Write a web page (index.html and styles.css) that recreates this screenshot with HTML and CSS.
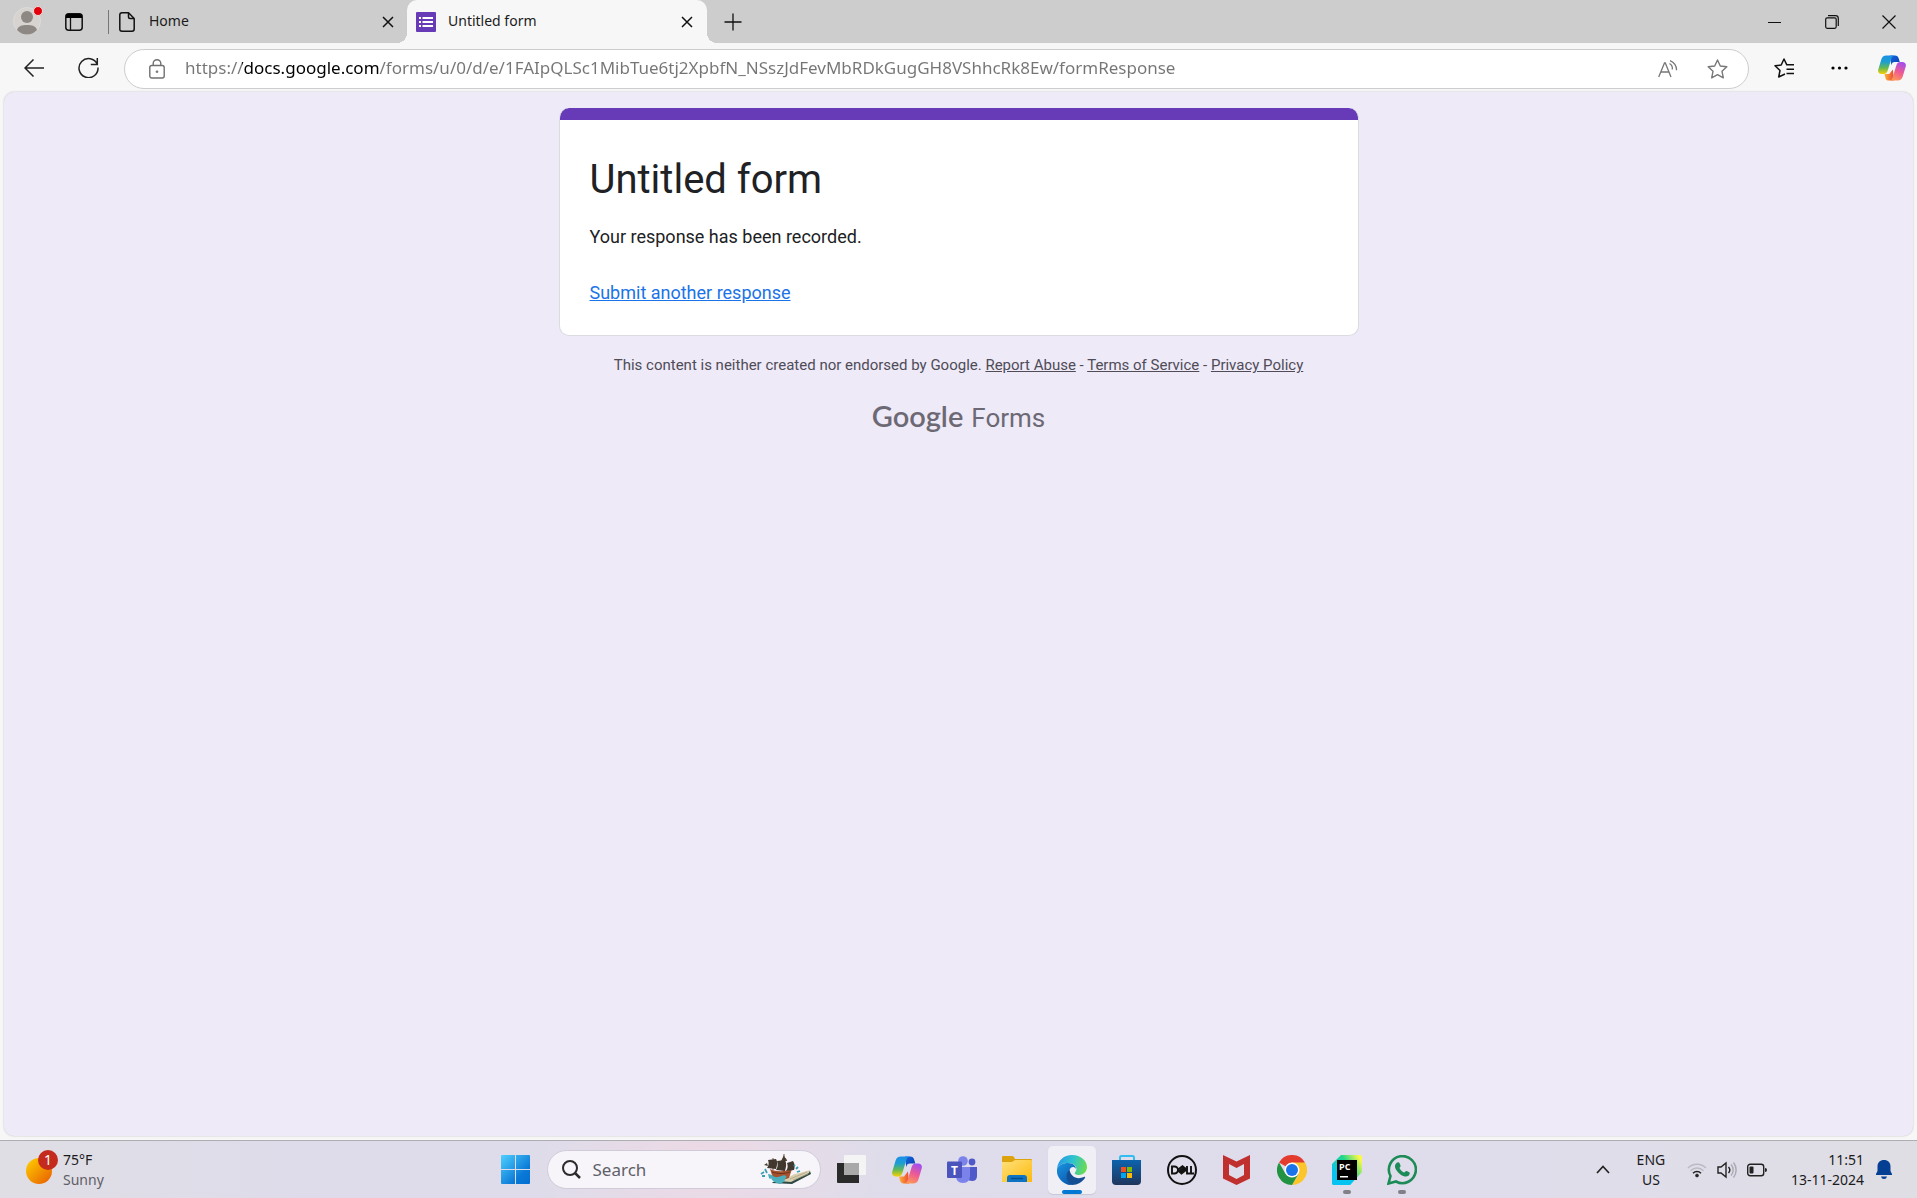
FILE: index.html
```html
<!DOCTYPE html>
<html lang="en">
<head>
<meta charset="utf-8">
<meta name="viewport" content="width=device-width, initial-scale=1">
<title>Untitled form</title>
<link rel="stylesheet" href="styles.css">
</head>
<body>
<svg class="defs" width="0" height="0" aria-hidden="true">
  <defs>
    <linearGradient id="cpA" x1="0" y1="0" x2="0" y2="1"><stop offset="0" stop-color="#1b8fe8"/><stop offset=".35" stop-color="#1d9fd0"/><stop offset=".65" stop-color="#5fb85a"/><stop offset="1" stop-color="#f7d000"/></linearGradient>
    <linearGradient id="cpB" x1=".7" y1="0" x2=".3" y2="1"><stop offset="0" stop-color="#a34df0"/><stop offset=".5" stop-color="#ee5a93"/><stop offset="1" stop-color="#ff9a55"/></linearGradient>
    <linearGradient id="cpC" x1="0" y1="0" x2="1" y2="1"><stop offset="0" stop-color="#1667e0"/><stop offset="1" stop-color="#0a3cae"/></linearGradient>
    <linearGradient id="cpD" x1="0" y1="0" x2="1" y2="0"><stop offset="0" stop-color="#ffb13d"/><stop offset="1" stop-color="#e94a2e"/></linearGradient>
    <symbol id="copilot" viewBox="0 0 30 27">
      <path fill="url(#cpC)" d="M13 0h5c2.500 0 3.500 1 4.200 3.300L23.300 7H18c-2.500 0-3 1-3.800 3.500z"/>
      <path fill="url(#cpD)" d="M7 20h5l4-5 1 12h-5c-2.500 0-3.500-1-4.200-3.400z"/>
      <path fill="url(#cpA)" d="M9 0h9c-2 0-3 1.200-3.700 3.500L10.500 16c-.8 2.500-1.800 4-4.500 4H4c-3 0-4.500-2-3.700-5L3.600 4C4.400 1.500 6 0 9 0z"/>
      <path fill="url(#cpB)" d="M21 27h-9c2 0 3-1.200 3.700-3.500L19.500 11c.8-2.500 1.800-4 4.500-4h2c3 0 4.500 2 3.700 5l-3.300 11c-.8 2.500-2.400 4-5.400 4z"/>
    </symbol>
    <symbol id="cross" viewBox="0 0 12 12"><path d="M1 1l10 10M11 1L1 11" fill="none" stroke="#111" stroke-width="1.500"/></symbol>
  </defs>
</svg>

<header class="browser">
  <div class="tabstrip">
    <button class="plain profile" aria-label="Profile">
      <svg width="32" height="32" viewBox="0 0 32 32"><circle cx="15" cy="18" r="13.500" fill="#d6d3d0" stroke="#dedcda"/><circle cx="15" cy="14" r="6" fill="#8d8884"/><path d="M5 27c1-4 5-5 10-5s9 1 10 5c-3 3-6 4.500-10 4.500S8 30 5 27z" fill="#8d8884"/><circle cx="26" cy="8" r="4.500" fill="#e3000b" stroke="#f3dcdc"/></svg>
    </button>
    <button class="plain workspaces" aria-label="Tab actions">
      <svg width="18" height="18" viewBox="0 0 18 18"><rect x=".8" y=".8" width="16.400" height="16.400" rx="3" fill="none" stroke="#111" stroke-width="1.500"/><path d="M1 5V3q0-2 2-2h12q2 0 2 2v2z" fill="#000"/><path d="M5.500 5v12" stroke="#111" stroke-width="1.300"/></svg>
    </button>
    <div class="tab">
      <svg width="16" height="20" viewBox="0 0 16 20" fill="none" stroke="#111" stroke-width="1.500"><path d="M3 .8h6.500L15.200 6.500V17q0 2.200-2.200 2.200H3Q.8 19.200.8 17V3Q.8.800 3 .8z"/><path d="M9.500 1v4q0 1.500 1.500 1.500h4"/></svg>
      <span class="tab-title">Home</span>
      <button class="plain close" aria-label="Close Home"><svg width="12" height="12"><use href="#cross"/></svg></button>
    </div>
    <div class="tab active">
      <svg width="20" height="20" viewBox="0 0 20 20"><rect width="20" height="20" rx="1" fill="#673ab7"/><path d="M3 5h2v2H3zM6.500 5H17v2H6.500zM3 9h2v2H3zM6.500 9H17v2H6.500zM3 13h2v2H3zM6.500 13H17v2H6.500z" fill="#fff"/></svg>
      <span class="tab-title">Untitled form</span>
      <button class="plain close" aria-label="Close Untitled form"><svg width="12" height="12"><use href="#cross"/></svg></button>
    </div>
    <button class="plain new-tab" aria-label="New tab"><svg width="18" height="18" viewBox="0 0 18 18"><path d="M9 .5v17M.5 9h17" stroke="#111" stroke-width="1.300"/></svg></button>
    <div class="window-controls">
      <button class="plain" aria-label="Minimize"><svg width="14" height="14" viewBox="0 0 14 14"><path d="M0 7.500h13" stroke="#111"/></svg></button>
      <button class="plain" aria-label="Restore"><svg width="14" height="14" viewBox="0 0 14 14" fill="none" stroke="#111" stroke-width="1.200"><rect x=".7" y="2.800" width="10.500" height="10.500" rx="1.500"/><path d="M3 .7h7.500q2.800 0 2.800 2.800V11"/></svg></button>
      <button class="plain" aria-label="Close"><svg width="14" height="14" viewBox="0 0 14 14"><path d="M.5.500l13 13M13.500.500l-13 13" stroke="#111" stroke-width="1.200"/></svg></button>
    </div>
  </div>

  <div class="toolbar">
    <button class="plain tool" aria-label="Back"><svg width="20" height="18" viewBox="0 0 20 18" fill="none" stroke="#222" stroke-width="1.500"><path d="M9.500.500L1 9l8.500 8.500M1 9h19"/></svg></button>
    <button class="plain tool" aria-label="Refresh"><svg width="21" height="21" viewBox="0 0 21 21" fill="none" stroke="#222" stroke-width="1.500"><path d="M19.300 7.500A9.500 9.500 0 1 0 20 10.500M19.300 1v6.500h-6.500"/></svg></button>
    <div class="address">
      <svg width="16" height="20" viewBox="0 0 16 20" fill="none" stroke="#707070" stroke-width="1.400"><rect x=".8" y="6.500" width="14.400" height="12.500" rx="2"/><path d="M4.200 6.500V4.500a3.800 3.800 0 0 1 7.600 0v2"/><circle cx="8" cy="12.700" r="1" fill="#707070" stroke-width=".6"/></svg>
      <input class="url" type="text" aria-label="Address" spellcheck="false" value="https://docs.google.com/forms/u/0/d/e/1FAIpQLSc1MibTue6tj2XpbfN_NSszJdFevMbRDkGugGH8VShhcRk8Ew/formResponse">
      <button class="plain" aria-label="Read aloud"><svg width="20" height="18" viewBox="0 0 20 18" fill="none" stroke="#777" stroke-width="1.300"><path d="M.7 17L6.500 3h.8L13 17M2.800 12h8.200M11.500 3.500a6 6 0 0 1 2.800 6M12 .7c3.500 1.500 6.500 5 6.600 9.500"/></svg></button>
      <button class="plain" aria-label="Add to favorites"><svg width="21" height="20" viewBox="0 0 21 20" fill="none" stroke="#777" stroke-width="1.400" stroke-linejoin="round"><path d="M10.500 1l2.800 6 6.500.800-4.800 4.500 1.300 6.500-5.800-3.200-5.800 3.200L6 12.300 1.200 7.800 7.700 7z"/></svg></button>
    </div>
    <button class="plain tool" aria-label="Favorites"><svg width="21" height="20" viewBox="0 0 21 20" fill="none" stroke="#111" stroke-width="1.500" stroke-linejoin="round"><path d="M11 16l-6.300 3L6 12.500 1 7.800l6.200-.8L10 1l2.800 5.800H20M12.500 11.200H20M12.500 15.500H20"/></svg></button>
    <button class="plain tool" aria-label="Settings and more"><svg width="17" height="4" viewBox="0 0 17 4"><circle cx="2" cy="2" r="1.600"/><circle cx="8.500" cy="2" r="1.600"/><circle cx="15" cy="2" r="1.600"/></svg></button>
    <button class="plain copilot" aria-label="Copilot"><svg width="28" height="26"><use href="#copilot"/></svg></button>
  </div>
</header>

<main class="page">
  <section class="card">
    <h1>Untitled form</h1>
    <p>Your response has been recorded.</p>
    <a class="again" href="#">Submit another response</a>
  </section>
  <p class="legal">This content is neither created nor endorsed by Google. <a href="#">Report Abuse</a> - <a href="#">Terms of Service</a> - <a href="#">Privacy Policy</a></p>
  <a class="brand" href="#"><span class="brand-name">Google</span><span>Forms</span></a>
</main>

<footer class="taskbar">
  <button class="plain weather">
    <svg width="32" height="35" viewBox="0 0 32 35"><defs><linearGradient id="sun" x1="0" y1="0" x2="1" y2="1"><stop offset="0" stop-color="#ffd200"/><stop offset="1" stop-color="#e85a00"/></linearGradient></defs><circle cx="13" cy="21" r="13" fill="url(#sun)"/><circle cx="22" cy="10" r="10" fill="#c42b1c"/><text x="22" y="15" text-anchor="middle" class="badge">1</text></svg>
    <span class="stack"><span>75°F</span><span class="muted">Sunny</span></span>
  </button>

  <nav class="apps" aria-label="Taskbar">
    <button class="plain app" aria-label="Start"><svg width="30" height="30" viewBox="0 0 30 30"><defs><linearGradient id="win" x1="0" y1="0" x2="1" y2="1"><stop offset="0" stop-color="#4fd0ff"/><stop offset=".7" stop-color="#0a78d6"/><stop offset="1" stop-color="#006fd0"/></linearGradient></defs><path fill="url(#win)" d="M1 0h13v14H0V1q0-1 1-1zM15 0h13q1 0 1 1v13H15zM0 15h14v14H1q-1 0-1-1zM15 15h14v13q0 1-1 1H15z"/></svg></button>
    <label class="search">
      <svg width="19" height="19" viewBox="0 0 19 19" fill="none" stroke="#2b2b2b" stroke-width="2"><circle cx="8" cy="8" r="7"/><path d="M13 13l5 5" stroke-width="2.500"/></svg>
      <input type="search" placeholder="Search" aria-label="Search">
      <svg width="52" height="32" viewBox="0 0 52 32">
        <path d="M13 28l16-2 21-9 1 3-19 10-20-1z" fill="#2c4a43"/>
        <path d="M27 25c4-4 9-6 13-6l10-3-1 3-18 9-13-1z" fill="#d9cfb0"/><path d="M30 25l17-7M33 26l15-6" stroke="#a89c7c" stroke-width=".7"/>
        <path d="M10 15c6 3 15 3 22 0l-3 9c-6 3-12 2-16 0z" fill="#a5522f"/><path d="M12 18c6 2 12 2 18 0" stroke="#6d3018" fill="none"/>
        <path d="M8 6l8-1c2 3 1 7 0 10l-9-1c2-3 2-5 1-8zM17 7l8-1c2 4 1 7 0 11l-9-1c2-3 2-6 1-9zM27 9l6-2c2 3 2 6 1 9l-8 1c2-3 2-5 1-8z" fill="#41392f"/><path d="M21 7l3-6c0 3 3 3 3 6zM7 9l-3 2 4 1z" fill="#4c4034"/><path d="M24 0v17M13 4v12" stroke="#4a3020" stroke-width=".8"/>
        <path d="M8 20c4 0 6 4 10 3s6-3 8-1-3 3-1 5l-5 3c-5-1-8-3-9-6-1 2-2 1-3-4z" fill="#4aaebd"/><path d="M1 20l3-2M2 22h3M7 19l-2-4M36 15l2-2M37 18l3-1M35 12l-1-1" stroke="#3d9fb2" stroke-width="1.800"/>
      </svg>
    </label>
    <button class="plain app" aria-label="Task view"><svg width="30" height="30" viewBox="0 0 30 30"><path d="M0 8h22v20H1q-1 0-1-1z" fill="#2c2b2c"/><rect x="7" width="22" height="20" rx="1" fill="#f4f4f4"/><path d="M7 8h15v12H8q-1 0-1-1z" fill="#a9a9aa"/></svg></button>
    <button class="plain app" aria-label="Copilot"><svg width="30" height="28"><use href="#copilot"/></svg></button>
    <button class="plain app" aria-label="Teams"><svg width="30" height="28" viewBox="0 0 30 28"><circle cx="16" cy="5" r="4.800" fill="#7b83eb"/><circle cx="25" cy="6" r="3.400" fill="#5059c9"/><path d="M20 11h10v9q0 5-5 5-3 0-5-2z" fill="#5059c9"/><path d="M9 11h14v9q0 7-7 7t-7-7z" fill="#7b83eb"/><rect y="5.500" width="15" height="16.500" rx="1" fill="#4b53bc"/><text x="7.500" y="18.500" text-anchor="middle" class="teams-t">T</text></svg></button>
    <button class="plain app" aria-label="File Explorer"><svg width="30" height="27" viewBox="0 0 30 27"><defs><linearGradient id="fold" x1="0" y1="0" x2="1" y2="1"><stop offset="0" stop-color="#ffe17c"/><stop offset="1" stop-color="#fdb90c"/></linearGradient></defs><path d="M0 1q0-1 1-1h9q1 0 2 1l1 2h16q1 0 1 1v6H0z" fill="#dca30c"/><path d="M0 6h10l3-2h16q1 0 1 1v21H0z" fill="url(#fold)"/><path d="M5 26v-4q0-3 3-3h14q3 0 3 3v4z" fill="#0d73c4"/><path d="M9 22.500h12" stroke="#074c86" stroke-width="1.400"/></svg></button>
    <button class="plain app open focused" aria-label="Edge"><svg width="30" height="30" viewBox="0 0 30 30"><defs><linearGradient id="edA" x1="0" y1=".3" x2="1" y2=".5"><stop offset="0" stop-color="#2597e6"/><stop offset=".5" stop-color="#2fc3cf"/><stop offset="1" stop-color="#69dc50"/></linearGradient><linearGradient id="edB" x1="0" y1="0" x2=".8" y2="1"><stop offset="0" stop-color="#1a96e0"/><stop offset="1" stop-color="#0a50a8"/></linearGradient></defs><path d="M0 14C1 5 7 0 15 0c9 0 15 6 15 12 0 5-4 8-8 8-3 0-5-1-4-2.500C22 13 17 8 11 8 6 8 2 10 0 14z" fill="url(#edA)"/><path d="M0 14c2-4 6-6 11-6 5 0 8 3 8 6-2-3-5-2-6 0-3 6 2 12 8 11-3 3-6 5-9 5C5 28-1 22 0 14z" fill="url(#edB)"/><path d="M12.500 15c-5 3-3 13 2.500 15 6 0 10-3 13-7 .5-1-.5-1.500-1-1-7 3-13 0-14.500-7z" fill="#144f93"/></svg></button>
    <button class="plain app" aria-label="Microsoft Store"><svg width="30" height="30" viewBox="0 0 30 30"><defs><linearGradient id="store" x1="0" y1="0" x2="0" y2="1"><stop offset="0" stop-color="#0c63ad"/><stop offset="1" stop-color="#20365c"/></linearGradient></defs><path d="M8 8V2.500Q8 1 9.500 1h11Q22 1 22 2.500V8" fill="none" stroke="#31bdf0" stroke-width="2"/><path d="M0 5h29v21q0 4-4 4H4q-4 0-4-4z" fill="url(#store)"/><path d="M9 12h5v5H9z" fill="#f25022"/><path d="M15 12h5v5h-5z" fill="#7fba00"/><path d="M9 18h5v5H9z" fill="#00a4ef"/><path d="M15 18h5v5h-5z" fill="#ffb900"/></svg></button>
    <button class="plain app" aria-label="Dell"><svg width="30" height="30" viewBox="0 0 30 30"><circle cx="15" cy="15" r="14" fill="none" stroke="#111" stroke-width="2"/><g fill="none" stroke="#111" stroke-width="1.900"><path d="M5 11.500h2.500a3.500 3.500 0 0 1 0 7H5z"/><path d="M10.500 15l5-3.700 1.500 1.200-4.500 3.500M10.500 15l4 3.500 5-3.800-2-2M13.500 17.500l5-4"/><path d="M20 11v7.500h3M24 11v7.500h3"/></g></svg></button>
    <button class="plain app" aria-label="McAfee"><svg width="27" height="30" viewBox="0 0 27 30"><path d="M0 0l13.500 6.500L27 0v23.500L13.500 30 0 23.500zM6 9v11l7.500 4 7.500-4V9l-7.500 4z" fill="#c0302f" fill-rule="evenodd"/></svg></button>
    <button class="plain app" aria-label="Chrome"><svg width="30" height="30" viewBox="0 0 30 30"><path d="M15 15L2 7.500A15 15 0 0 1 28 7.500z" fill="#e33b2e"/><path d="M15 15V7.500h13A15 15 0 0 1 15 30l6.500-11z" fill="#fcc52b"/><path d="M15 15l6.500 3.700L15 30A15 15 0 0 1 2 7.500l6.500 11.200z" fill="#229342"/><circle cx="15" cy="15" r="7.500" fill="#fff"/><circle cx="15" cy="15" r="6" fill="#1a73e8"/></svg></button>
    <button class="plain app open" aria-label="PyCharm"><svg width="30" height="30" viewBox="0 0 30 30"><defs><linearGradient id="pc" x1="0" y1=".6" x2="1" y2="0"><stop offset="0" stop-color="#07c3f2"/><stop offset=".5" stop-color="#21d789"/><stop offset=".9" stop-color="#fcf84a"/></linearGradient></defs><path d="M9 0h19q2 0 2 2v15L18 30H2q-2 0-2-2V9z" fill="url(#pc)"/><path d="M0 12l8 10h17L18 30H2q-2 0-2-2z" fill="#07c3f2"/><path d="M5 5h20v20H5z"/><text x="7" y="15" class="pc-t">PC</text><path d="M8 21h8v1.500H8z" fill="#fff"/></svg></button>
    <button class="plain app open" aria-label="WhatsApp"><svg width="30" height="30" viewBox="0 0 30 30"><path d="M1.500 28.500l2-7.500a13.500 13.500 0 1 1 5.500 5.500z" fill="none" stroke="#1c8b56" stroke-width="2.600"/><path d="M9.500 8c1-1 2.500-1 3 0l1 2.500c.5 1-1 2-1 2.500 1 2 2.500 3.500 4.500 4.500.8.300 1.500-2 2.600-1.500l2.700 1.300c1 .6.300 2.500-.8 3.500-2 1.500-5 .8-8-1.300-3-2.200-5-5-5.500-7.500-.2-1.500.5-3 1.500-4z" fill="#1c8b56"/></svg></button>
  </nav>

  <div class="tray">
    <button class="plain chevron" aria-label="Show hidden icons"><svg width="14" height="9" viewBox="0 0 14 9"><path d="M1 8l6-6.500L13 8" fill="none" stroke="#222" stroke-width="1.700"/></svg></button>
    <button class="plain stack lang"><span>ENG</span><span>US</span></button>
    <button class="plain status" aria-label="Network, volume and battery">
      <svg width="20" height="16" viewBox="0 0 20 16" fill="none" stroke="#bcbac4" stroke-width="1.500"><path d="M1 6a12.500 12.500 0 0 1 18 0M3.500 8.800a9 9 0 0 1 13 0"/><path d="M6 11.200a5.700 5.700 0 0 1 8 0" stroke="#222"/><circle cx="10" cy="13.500" r="1.500" fill="#222" stroke="#222" stroke-width=".6"/></svg>
      <svg width="20" height="18" viewBox="0 0 20 18" fill="none" stroke="#222" stroke-width="1.400"><path d="M1 6h3l5-4v14l-5-4H1z"/><path d="M11.500 6a4.500 4.500 0 0 1 0 6"/><path d="M14 3.500a8 8 0 0 1 0 11M16.500 1.500a12 12 0 0 1 0 15" stroke="#aaa8b2"/></svg>
      <svg width="20" height="14" viewBox="0 0 20 14"><rect x=".7" y="1.200" width="16" height="11.600" rx="2.500" fill="none" stroke="#222" stroke-width="1.400"/><rect x="2.500" y="3.500" width="4" height="7" rx="1" fill="#222"/><path d="M18 5q2 0 2 2t-2 2z" fill="#222"/></svg>
    </button>
    <button class="plain stack clock"><span>11:51</span><span>13-11-2024</span></button>
    <button class="plain" aria-label="Notifications"><svg width="16" height="19" viewBox="0 0 16 19"><path d="M8 0c4 0 6.500 2.500 6.500 6.500V11L16 14v1H0v-1l1.500-3V6.500C1.500 2.500 4 0 8 0zM5 16.500h6q-.5 2.500-3 2.500t-3-2.500z" fill="#053f94"/></svg></button>
  </div>
</footer>
</body>
</html>
```
FILE: styles.css
```css
* { box-sizing: border-box; }

body {
  margin: 0;
  min-height: 100vh;
  display: flex;
  flex-direction: column;
  background: #f7f7f7;
  color: #1b1b1b;
  font: 15px/20px "Noto Sans", "Open Sans", sans-serif;
}

svg { display: block; flex: none; }
.defs { position: absolute; }

.plain {
  display: flex;
  align-items: center;
  justify-content: center;
  flex: none;
  margin: 0;
  padding: 0;
  border: 0;
  background: none;
  color: inherit;
  font: inherit;
}

/* Tab strip */
.tabstrip {
  display: flex;
  align-items: stretch;
  height: 43px;
  padding-left: 12px;
  background: #cdcdcd;
}
.profile { width: 32px; padding-bottom: 6px; }
.workspaces { width: 60px; }
.tab {
  display: flex;
  align-items: center;
  flex: 0 1 300px;
  gap: 12px;
  padding: 0 14px 0 9px;
  font-size: 14px;
}
.tab:not(.active) {
  margin-left: 4px;
  flex-basis: 299px;
  gap: 14px;
  padding: 0 13px 0 11px;
  background: linear-gradient(#777, #777) left center / 1px 24px no-repeat;
}
.tab.active {
  position: relative;
  background: #f7f7f7;
  border-radius: 10px 10px 0 0;
}
.tab.active::before,
.tab.active::after {
  content: "";
  position: absolute;
  bottom: 0;
  width: 10px;
  height: 10px;
}
.tab.active::before { right: 100%; background: radial-gradient(circle at 0 0, #cdcdcd 10px, #f7f7f7 10px); }
.tab.active::after { left: 100%; background: radial-gradient(circle at 100% 0, #cdcdcd 10px, #f7f7f7 10px); }
.tab-title { flex: 1; padding-bottom: 2px; }
.new-tab { width: 52px; }
.window-controls { display: flex; margin-left: auto; }
.window-controls .plain { width: 57px; }

/* Toolbar */
.toolbar {
  display: flex;
  align-items: center;
  height: 49px;
  padding: 0 11px 0 6px;
}
.tool { width: 55px; height: 40px; }
.address {
  display: flex;
  align-items: center;
  flex: 1;
  gap: 20px;
  height: 40px;
  margin: 2px 8px 0;
  padding: 0 20px 0 24px;
  border: 1px solid #cdcdcd;
  border-radius: 20px;
  background: #fff;
}
.address .plain + .plain { margin-left: 9px; }
/* the host part of the address is drawn darker than the rest */
.url {
  flex: 1;
  min-width: 0;
  padding: 0 0 2px;
  border: 0;
  outline: 0;
  color: #707070;
  font: 17px/24px "Noto Sans", "Open Sans", sans-serif;
  background: linear-gradient(90deg, #757575 57px, #000 57px 195px, #757575 195px);
  -webkit-background-clip: text;
  background-clip: text;
  -webkit-text-fill-color: transparent;
}
.copilot { width: 39px; justify-content: flex-end; }

/* Form page */
.page {
  flex: 1;
  display: flex;
  flex-direction: column;
  align-items: center;
  margin: 0 4px 4px;
  padding: 16px 16px 32px;
  border-radius: 10px;
  background: #eeeaf8;
  box-shadow: 0 0 2px #bbb;
  font-family: Roboto, sans-serif;
}
.card {
  width: 100%;
  max-width: 800px;
  padding: 45px 30px 30px;
  border: 1px solid #dadce0;
  border-top: 0;
  border-radius: 10px;
  background: linear-gradient(#673ab7, #673ab7) top / 100% 12px no-repeat border-box #fff;
  color: #202124;
  font-size: 18px;
  line-height: 24px;
}
.card h1 { margin: 0 0 18px; font-size: 40px; line-height: 54px; font-weight: 400; }
.card p { margin: 0 0 32px; }
.again { color: #1a73e8; }
.legal { margin: 18px 0 0; color: #4f4c57; font-size: 15px; line-height: 22px; }
.legal a { color: inherit; }
.brand {
  display: flex;
  align-items: baseline;
  gap: 8px;
  margin-top: 20px;
  color: #6c6974;
  font-size: 26px;
  line-height: 40px;
  text-decoration: none;
}
.brand-name { font-family: Lato, sans-serif; font-weight: 600; font-size: 29px; }

/* Taskbar */
.taskbar {
  display: grid;
  grid-template-columns: 1fr auto 1fr;
  align-items: center;
  height: 58px;
  border-top: 1px solid #adadb2;
  background: radial-gradient(ellipse 180px 90px at 37% 40%, #eed9e4, #eed9e400), linear-gradient(90deg, #dfdee4, #dedcea 15%, #dfddeb 80%, #dfdee4);
}
.weather { justify-self: start; gap: 5px; padding-left: 26px; }
.weather svg { margin-bottom: 4px; }
.stack { display: flex; flex-direction: column; text-align: left; font-size: 14px; line-height: 20px; }
.muted { color: #5f5e66; }
.badge { font: 14px "Noto Sans", sans-serif; fill: #fff; }
.apps { display: flex; align-items: center; gap: 7px; }
.app { position: relative; width: 48px; height: 48px; border-radius: 5px; }
.app.focused { background: #f0eff6; box-shadow: 0 1px 1px #c9c7d2; }
.app.open::after {
  content: "";
  position: absolute;
  bottom: 0;
  width: 8px;
  height: 4px;
  border-radius: 2px;
  background: #818088;
}
.app.focused::after { width: 20px; background: #0078d4; }
.teams-t { font: bold 12px "Open Sans", sans-serif; fill: #fff; }
.pc-t { font: bold 9px "Open Sans", sans-serif; fill: #fff; }
.search {
  display: flex;
  align-items: center;
  gap: 12px;
  width: 274px;
  height: 39px;
  padding: 0 8px 0 14px;
  border: 1px solid #cfcbd9;
  border-radius: 20px;
  background: #f8f5fa;
}
.search input {
  flex: 1;
  min-width: 0;
  padding: 0;
  border: 0;
  outline: 0;
  background: none;
  font: 17px/24px "Noto Sans", sans-serif;
}
.search input::placeholder { color: #606068; opacity: 1; }
.tray { display: flex; align-items: center; justify-self: end; padding-right: 25px; }
.chevron { width: 52px; }
.lang { align-items: center; width: 44px; }
.status { gap: 10px; margin: 0 24px 0 14px; }
.clock { align-items: flex-end; margin-right: 12px; }
```
